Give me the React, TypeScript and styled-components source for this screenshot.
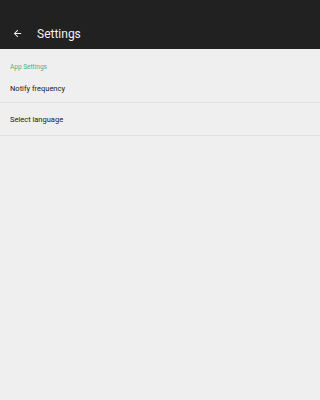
import React from "react";
import styled, { createGlobalStyle } from "styled-components";

const GlobalStyle = createGlobalStyle`
  html, body {
    margin: 0;
    padding: 0;
    background: #efefef;
  }
  body {
    font-family: Roboto, "Noto Sans", sans-serif;
  }
`;

const Screen = styled.div`
  width: 100%;
  min-height: 400px;
  background: #efefef;
  display: flex;
  flex-direction: column;
`;

const Toolbar = styled.div`
  height: 49px;
  background: #212121;
  display: flex;
  align-items: center;
  padding: 18px 0 0 12px;
  gap: 14px;
  box-sizing: border-box;
`;

const BackButton = styled.button`
  border: 0;
  background: none;
  padding: 0;
  width: 11px;
  height: 11px;
  display: flex;
  align-items: center;
  justify-content: center;
  color: #f2f2f2;
`;

const Title = styled.h1`
  margin: 0;
  font-size: 12px;
  font-weight: 400;
  color: #f2f2f2;
`;

const Category = styled.div`
  color: #3bb58f;
  font-size: 6.5px;
  padding: 12px 10px 0;
  height: 13px;
  line-height: 13px;
`;

const Row = styled.div<{ $height: number }>`
  height: ${({ $height }) => $height}px;
  display: flex;
  align-items: center;
  padding: 0 10px;
  font-size: 7.5px;
  color: #1a1a1a;
  border-bottom: 1px solid #e2e2e2;
`;

const ArrowIcon = () => (
  <svg width="11" height="11" viewBox="0 0 24 24" fill="currentColor">
    <path d="M20 11H7.83l5.59-5.59L12 4l-8 8 8 8 1.41-1.41L7.83 13H20v-2z" />
  </svg>
);

export default function App() {
  return (
    <Screen>
      <GlobalStyle />
      <Toolbar>
        <BackButton aria-label="Back">
          <ArrowIcon />
        </BackButton>
        <Title>Settings</Title>
      </Toolbar>
      <Category>App Settings</Category>
      <Row $height={28}>Notify frequency</Row>
      <Row $height={32}>Select language</Row>
    </Screen>
  );
}
